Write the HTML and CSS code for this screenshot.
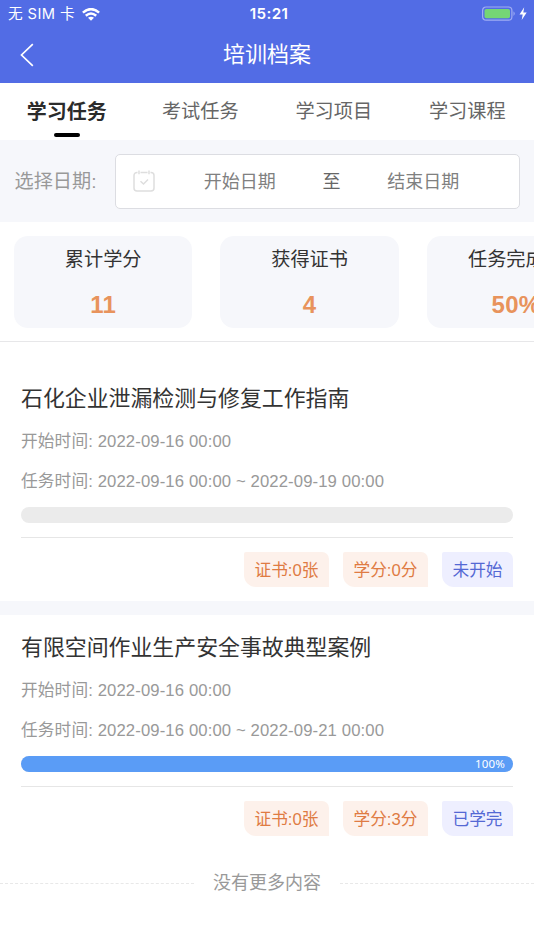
FILE: index.html
```html
<!DOCTYPE html>
<html lang="zh-CN">
<head>
<meta charset="utf-8">
<title>培训档案</title>
<link rel="stylesheet" href="styles.css">
</head>
<body>
<header class="header">
  <div class="status">
    <div class="carrier"><span>无 SIM 卡</span>
      <svg class="wifi" width="18" height="13" viewBox="0 0 18 13" fill="none" stroke="#fff" stroke-width="2.5"><path d="M.9 4.6Q9-2.4 17.1 4.6M3.8 7.8Q9 3.3 14.2 7.8"/><path d="M9 12.8 6 9.8Q9 7.5 12 9.8Z" fill="#fff" stroke="none"/></svg>
    </div>
    <time class="clock">15:21</time>
    <svg class="battery" width="46" height="16" viewBox="0 0 46 16"><rect x=".6" y="1" width="29.3" height="13.2" rx="3.5" fill="none" stroke="#a0adf3" stroke-width="1.2"/><rect x="2.5" y="2.9" width="25.5" height="9.4" rx="1.8" fill="#75d675"/><path d="M31.5 5.3q2.5 2.3 0 4.6z" fill="#a0adf3"/><path d="M42.2 1.3 37.5 8.4h3.2l-1 5.5 5-7.3h-3.4z" fill="#fff"/></svg>
  </div>
  <div class="navbar">
    <svg class="back" width="14" height="24" viewBox="0 0 14 24" fill="none" stroke="#fff" stroke-width="1.7"><path d="M12.8 1.2 1.5 12l11.3 10.8"/></svg>
    <h1 class="page-title">培训档案</h1>
  </div>
</header>
<nav class="tabs">
  <a class="tab active">学习任务</a>
  <a class="tab">考试任务</a>
  <a class="tab">学习项目</a>
  <a class="tab">学习课程</a>
</nav>
<section class="filter">
  <span class="filter-label">选择日期:</span>
  <div class="range">
    <svg class="calendar" width="22" height="22" viewBox="0 0 22 22" fill="none" stroke="#dedede" stroke-width="1.5"><path d="M4.5 2.4H4A3 3 0 0 0 1 5.4V18a3 3 0 0 0 3 3h14a3 3 0 0 0 3-3V5.4a3 3 0 0 0-3-3h-.5M7.5 2.4h7M6 .5v3.8M16 .5v3.8M7.5 11.2l3 2.8 4.5-4.5"/></svg>
    <span class="date">开始日期</span>
    <span class="to">至</span>
    <span class="date">结束日期</span>
  </div>
</section>
<section class="stats">
  <div class="stat"><span>累计学分</span><b>11</b></div>
  <div class="stat"><span>获得证书</span><b>4</b></div>
  <div class="stat"><span>任务完成率</span><b>50%</b></div>
</section>
<main>
  <article class="task first">
    <h2>石化企业泄漏检测与修复工作指南</h2>
    <p>开始时间: 2022-09-16 00:00</p>
    <p>任务时间: 2022-09-16 00:00 ~ 2022-09-19 00:00</p>
    <div class="progress"></div>
    <div class="tags"><span class="tag">证书:0张</span><span class="tag">学分:0分</span><span class="tag state">未开始</span></div>
  </article>
  <article class="task">
    <h2>有限空间作业生产安全事故典型案例</h2>
    <p>开始时间: 2022-09-16 00:00</p>
    <p>任务时间: 2022-09-16 00:00 ~ 2022-09-21 00:00</p>
    <div class="progress"><div class="fill" style="width:100%">100%</div></div>
    <div class="tags"><span class="tag">证书:0张</span><span class="tag">学分:3分</span><span class="tag state">已学完</span></div>
  </article>
</main>
<footer class="end">没有更多内容</footer>
</body>
</html>
```
FILE: styles.css
```css
* { box-sizing: border-box; }
body {
  margin: 0;
  height: 950px;
  overflow: hidden;
  background: #fff;
  color: #333;
  font-family: "Liberation Sans", "Noto Sans CJK SC", sans-serif;
}
h1, h2, p { margin: 0; font-weight: 400; }
svg { display: block; flex: none; }

.header { height: 83px; background: #526ce5; color: #fff; }
.status {
  display: grid;
  grid-template-columns: 1fr auto 1fr;
  align-items: center;
  height: 27px;
  padding: 0 6px 0 8px;
}
.carrier { display: flex; align-items: center; gap: 7px; font: 14.7px/28px Inter, "Noto Sans CJK SC", sans-serif; letter-spacing: .4px; }
.clock { font: 600 15.2px/28px Inter, sans-serif; letter-spacing: .4px; padding-left: 2px; }
.battery { justify-self: end; }
.navbar {
  display: grid;
  grid-template-columns: 60px 1fr 60px;
  align-items: center;
  height: 56px;
}
.back { margin-left: 20px; }
.page-title { font-size: 22px; line-height: 56px; text-align: center; }

.tabs { display: flex; height: 57px; }
.tab {
  display: flex;
  flex: 1;
  flex-direction: column;
  align-items: center;
  color: #666;
  font-size: 19.2px;
  line-height: 58px;
}
.tab.active { color: #2b2b2b; font-size: 20px; font-weight: 700; }
.tab.active::after {
  content: "";
  width: 26px;
  height: 4px;
  margin-top: -8px;
  border-radius: 2px;
  background: #000;
}

.filter {
  display: flex;
  align-items: center;
  height: 82px;
  padding: 0 14px 0 14.5px;
  background: #f6f7fb;
}
.filter-label { width: 100.5px; padding-bottom: 2px; color: #999; font-size: 19.2px; }
.range {
  display: flex;
  flex: 1;
  align-items: center;
  height: 55px;
  padding: 0 13px 0 17px;
  border: 1px solid #dcdde2;
  border-radius: 5px;
  background: #fff;
  color: #808080;
  font-size: 18px;
}
.date, .to { padding-bottom: 2px; }
.date { flex: 1; text-align: center; }
.calendar { margin-right: 2px; }
.to { color: #666; }

.stats {
  display: flex;
  gap: 28px;
  height: 120px;
  padding: 14px 14px 0;
  overflow: hidden;
  border-bottom: 1px solid #e7e7e9;
}
.stat {
  display: flex;
  flex: none;
  flex-direction: column;
  align-items: center;
  width: 178.4px;
  height: 92px;
  border-radius: 14px;
  background: #f6f7fb;
}
.stat span { font-size: 19.2px; line-height: 48px; }
.stat b { color: #e8935c; font-size: 24px; line-height: 42px; letter-spacing: .3px; }

.task { height: 249px; padding: 11px 21px 0; border-bottom: 14px solid #f6f7fb; }
.task.first { height: 273px; padding-top: 35px; }
.task:last-child { border-color: #fff; height: 235px; }
.task h2 { font-size: 21.9px; line-height: 44px; }
.task p {
  color: #999;
  font-size: 16.7px;
  line-height: 40px;
  letter-spacing: .11px;
}
.task h2 + p { margin-top: 1px; }
.progress { height: 16px; margin-top: 5px; border-radius: 8px; background: #ebebeb; }
.fill {
  height: 16px;
  padding-right: 8px;
  border-radius: 8px;
  background: #5a9cf6;
  color: #fff;
  font: 11.5px/16px "Noto Sans", sans-serif;
  letter-spacing: .2px;
  text-align: right;
}
.tags {
  display: flex;
  justify-content: flex-end;
  gap: 14px;
  margin-top: 14px;
  padding-top: 14px;
  border-top: 1px solid #e6e6e6;
}
.tag {
  width: 85px;
  height: 35px;
  border-radius: 2px 7px 0 12px;
  background: #fdf1eb;
  color: #df7b43;
  font-size: 16.7px;
  line-height: 37px;
  text-align: center;
}
.tag.state { width: 71px; background: #eeefff; color: #5468d4; }

.end {
  display: flex;
  align-items: center;
  gap: 19px;
  height: 40px;
  margin-top: 13px;
  color: #999;
  font-size: 18px;
  line-height: 26px;
}
.end::before, .end::after { content: ""; flex: 1; border-top: 1px dashed #e8e8e8; }
```
